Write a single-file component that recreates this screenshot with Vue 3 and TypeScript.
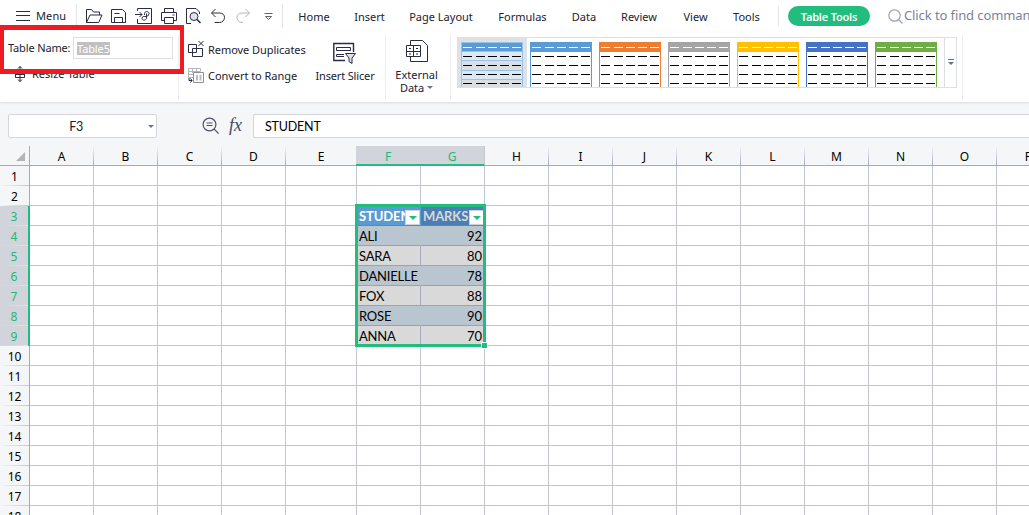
<script setup lang="ts">
interface Tab { label: string; width: number }
interface Column { name: string; width: number; selected: boolean }

const tabs: Tab[] = [
  { label: 'Home', width: 58 },
  { label: 'Insert', width: 53 },
  { label: 'Page Layout', width: 90 },
  { label: 'Formulas', width: 73 },
  { label: 'Data', width: 50 },
  { label: 'Review', width: 60 },
  { label: 'View', width: 53 },
  { label: 'Tools', width: 49 },
]
const thumbs: string[] = ['blue-light', 'blue', 'orange', 'gray', 'gold', 'indigo', 'green']
const dashX: number[] = [2, 15, 27, 39, 51]
const dashY: number[] = [14, 23, 32, 41]

const columns: Column[] = 'ABCDEFGHIJKLMNOP'.split('').map((name) => ({
  name,
  width: name === 'E' ? 71 : 64,
  selected: name === 'F' || name === 'G',
}))
const rows: number[] = Array.from({ length: 18 }, (_, i) => i + 1)
const data: Record<string, string> = {
  F3: 'STUDENT', G3: 'MARKS',
  F4: 'ALI', G4: '92',
  F5: 'SARA', G5: '80',
  F6: 'DANIELLE', G6: '78',
  F7: 'FOX', G7: '88',
  F8: 'ROSE', G8: '90',
  F9: 'ANNA', G9: '70',
}
const inRange = (r: number): boolean => r >= 3 && r <= 9
function cellClass(c: string, r: number): string[] {
  if ((c !== 'F' && c !== 'G') || !inRange(r)) return []
  const kind = r === 3 ? 'head' : r % 2 === 0 ? 'band' : 'plain'
  return ['filled', kind, 'col-' + c.toLowerCase()]
}
const template: string = '30px ' + columns.map((c) => c.width + 'px').join(' ')
</script>

<template>
  <div class="app">
    <header class="tabbar">
      <div class="menu">
        <svg width="14" height="12" viewBox="0 0 14 12"><path d="M0 1.500h14M0 5.500h14M0 10.500h14" /></svg>
        <span>Menu</span>
      </div>
      <div class="tools">
        <svg viewBox="0 0 18 18"><path d="M1.500 15.500V2.500h5l2 2.500h6v3M1.500 15.500L5 8h12l-3.300 7.500z" /></svg>
        <svg viewBox="0 0 18 18"><path d="M1.500 2.500h11l3 3v10h-14zM4.500 15.500V10.500H12.500V15.500M4.500 6.500H9.500" /></svg>
        <svg viewBox="0 0 18 18"><path d="M2.500 4V1.500H16.500V16.500H2.500V12M0 7.500H7M4.500 5L7 7.500L4.500 10M9.500 8V6.500C9.500 4 14 4 14 6.500S12 9.500 10 9.500M11.500 6.500V11C11.500 13.500 7 14 7 11.500S9 9.500 10 9.500" /></svg>
        <svg viewBox="0 0 18 18"><path d="M4.500 5.500V1.500H13.500V5.500M4 13.500H1.500V5.500H16.500V13.500H14M4.500 10.500H13.500V16.500H4.500zM12.500 8h2" /></svg>
        <svg viewBox="0 0 18 18"><path d="M6 16.500H1.500V1.500H11L14.500 5V7" /><circle cx="9" cy="9.500" r="4" class="lens" /><path d="M12 12.500l3.500 3.500" class="thick" /></svg>
        <svg viewBox="0 0 18 18"><path d="M5.500 2L1.500 6L5.500 10M1.800 6H9.500C13 6 14.500 8 14.500 10.500S12.500 15.500 9.500 15.500H4.500" /></svg>
        <svg viewBox="0 0 18 18" class="dim"><path d="M10.500 2L14.500 6L10.500 10M14.200 6H7C3.500 6 2 8 2 10.500S4 15.500 7 15.500H8" /></svg>
        <svg viewBox="0 0 18 18"><path d="M4.500 6.500H12.500M5.500 9.500H11.500L8.500 12.500z" class="chev" /></svg>
      </div>
      <nav class="tabs">
        <span v-for="t in tabs" :key="t.label" :style="{ width: t.width + 'px' }">{{ t.label }}</span>
      </nav>
      <div class="pill">Table Tools</div>
      <div class="search">
        <svg width="16" height="16" viewBox="0 0 16 16"><circle cx="6.500" cy="6.500" r="5.700" /><path d="M10.500 10.500l4 4" /></svg>
        <span>Click to find commands</span>
      </div>
    </header>

    <section class="ribbon">
      <div class="group naming">
        <div class="name-row"><span>Table Name:</span><div class="name-input"><mark>Table5</mark></div></div>
        <div class="resize">
          <svg width="12" height="18" viewBox="0 0 12 18"><path d="M4 3.500L6 1.500L8 3.500M4 14.500L6 16.500L8 14.500M1.500 6.500H10.500V12.500H1.500zM1.500 9.500H10.500M6 1.500V16.500" /></svg>
          <span>Resize Table</span>
        </div>
        <div class="highlight"></div>
      </div>
      <div class="group actions">
        <div class="stack">
          <div class="action"><svg viewBox="0 0 16 18"><path d="M.500 4.500H8.500V12.500H.500zM4.500 8.500H14.500V16.500H4.500zM10.500 1l5 5M15.500 1l-5 5" /></svg><span>Remove Duplicates</span></div>
          <div class="action"><svg viewBox="0 0 16 18"><path d="M.500 2.500H12.500V5M.500 2.500V11.500H5M.500 5.500H12.500M.500 8.500H5M4.500 2.500V7M8.500 2.500V6" class="dim" /><path d="M5.500 6.500H15.500V16.500H5.500z" class="mid" /><path d="M9 9V14.500M12.500 9V14.500" class="bars" /><path d="M1 12v2.500H4M2.500 12.500l1.500 2L2.500 16.500" /></svg><span>Convert to Range</span></div>
        </div>
        <div class="slicer">
          <svg width="24" height="22" viewBox="0 0 24 22"><path d="M12 18.500H.800V1.500H20.500V10" class="outline" /><path d="M3.500 5.500H17.500V8.500H3.500zM11 12.500H3.500V14.500H11" /><path d="M12.500 11.500H22.500L19 16V21.500L16 19.500V16z" class="funnel" /></svg>
          <span>Insert Slicer</span>
        </div>
      </div>
      <div class="group external">
        <svg width="24" height="24" viewBox="0 0 24 24"><path d="M5.500 6V1.500H17.500L22.500 6.500V22.500H5.500V18M1.500 6.500H15.500V17.500H1.500zM1.500 12.500H15.500M8.500 6.500V17.500" /><path d="M4 9.500h2M11 9.500h2M4 15h2M11 15h2" /></svg>
        <span>External</span>
        <span>Data <i class="caret"></i></span>
      </div>
      <div class="group styles">
        <div class="gallery">
          <div v-for="(t, i) in thumbs" :key="t" class="slot" :class="{ active: i === 0 }">
            <svg class="thumb" :class="t" width="62" height="45" viewBox="0 0 62 45" shape-rendering="crispEdges">
              <rect class="edge" width="62" height="50" />
              <rect class="paper" x="1" y="10" width="60" height="40" />
              <template v-if="i === 0">
                <rect class="alt" x="1" y="19" width="60" height="9" />
                <rect class="alt" x="1" y="38" width="60" height="9" />
                <path class="rule" d="M0 9.500H62M0 18.500H62M0 28.500H62M0 37.500H62M.500 0V45M61.500 0V45M0 .500H62" />
              </template>
              <rect v-for="x in dashX" :key="x" class="light" :x="x" y="5" width="9" height="1" />
              <template v-for="y in dashY" :key="'r' + y">
                <rect v-for="x in dashX" :key="x" :x="x" :y="y" width="9" height="1" />
              </template>
            </svg>
          </div>
          <div class="more"><svg width="6" height="7" viewBox="0 0 6 7"><path d="M0 0h6v1H0zM0 3h6L3 6z" /></svg></div>
        </div>
      </div>
    </section>

    <section class="formula">
      <div class="namebox"><span>F3</span><i class="caret"></i></div>
      <svg class="zoomer" width="18" height="18" viewBox="0 0 18 18"><circle cx="7.500" cy="7.500" r="6.400" /><path d="M12.200 12.200l4.300 4.300M4.500 6h6M4.500 8.500h6" /></svg>
      <span class="fx">fx</span>
      <div class="content">STUDENT</div>
    </section>

    <main class="sheet" :style="{ gridTemplateColumns: template }">
      <div class="corner"><i></i></div>
      <div v-for="c in columns" :key="c.name" class="colhead" :class="{ selected: c.selected }">{{ c.name }}</div>
      <template v-for="r in rows" :key="r">
        <div class="rowhead" :class="{ selected: inRange(r) }">{{ r }}</div>
        <div v-for="c in columns" :key="c.name + r" class="cell" :class="cellClass(c.name, r)">
          <span v-if="data[c.name + r]">{{ data[c.name + r] }}</span>
          <b v-if="r === 3 && c.selected" class="filter"><svg width="8" height="4" viewBox="0 0 8 4"><path d="M0 0h8L4 4z" /></svg></b>
        </div>
      </template>
      <div class="selection"><i></i></div>
    </main>
  </div>
</template>

<style>
body { margin: 0; overflow: hidden; }
</style>

<style scoped>
* { box-sizing: border-box; }
.app { width: 1029px; height: 515px; overflow: hidden; background: #f5f6f8; color: #21222f; font: 11px "Noto Sans", "Open Sans", sans-serif; white-space: nowrap; }
svg { display: block; flex: none; fill: none; stroke: #292c42; stroke-width: 1; }
i { font-style: normal; }
.tabbar { display: flex; height: 32px; background: #fff; }
.tabbar > * { flex: none; }
.menu { display: flex; align-items: center; width: 77px; height: 23px; margin-top: 4px; padding-left: 16px; gap: 6px; border-right: 1px solid #e3e4ea; }
.menu span { letter-spacing: .1px; }
.tools { display: flex; width: 206px; height: 24px; margin-top: 4px; padding: 3px 0 0 8px; gap: 7px; border-right: 1px solid #e3e4ea; }
.tools svg { width: 18px; height: 18px; }
.tools .dim { stroke: #b5b5b8; }
.lens { fill: #dfe3e8; }
.thick { stroke-width: 1.600; }
.outline { stroke-width: 1.400; }
.chev { stroke: #666; }
.tabs { display: flex; width: 496px; height: 20px; margin-top: 6px; padding-left: 2px; line-height: 21px; border-right: 1px solid #e3e4ea; }
.tabs span { flex: none; text-align: center; }
.pill { width: 82px; height: 20px; margin: 6px 0 0 9px; border-radius: 10px; background: #22bc7e; color: #fff; font-weight: 600; line-height: 21px; text-align: center; letter-spacing: -.2px; }
.search { display: flex; margin: 8px 0 0 18px; color: #7d819b; font-size: 13px; line-height: 15px; letter-spacing: -.1px; }
.search svg { margin-top: 1px; stroke: #9ba2be; stroke-width: 1.200; }

.ribbon { display: flex; height: 70px; background: #fff; box-shadow: 0 1px 2px #d9dade; position: relative; }
.group { flex: none; height: 65px; margin-top: 3px; border-right: 1px solid #ededf0; }
.naming { width: 179px; }
.name-row { display: flex; align-items: center; margin-top: 2px; height: 22px; padding-left: 8px; }
.name-row > span { width: 65px; letter-spacing: -.15px; margin-top: -2px; }
.name-input { width: 100px; height: 22px; border: 1px solid #dedfe3; padding-left: 3px; line-height: 20px; letter-spacing: -.1px; }
.name-input mark { display: inline-block; height: 13px; line-height: 14px; background: #c0c0c0; color: #fff; vertical-align: -1px; }
.resize { display: flex; margin-top: 6px; padding-left: 14px; gap: 6px; line-height: 18px; }
.highlight { position: absolute; left: 0; top: -7px; width: 184px; height: 49px; border: 5px solid #ef1b23; border-width: 5px 4px; }
.actions { display: flex; width: 207px; padding-left: 9px; }
.stack { width: 127px; padding-top: 5px; }
.action { display: flex; align-items: center; height: 18px; gap: 4px; margin-bottom: 8px; letter-spacing: -.05px; }
.action svg { width: 16px; height: 18px; margin-top: -1px; }
.action .dim { stroke: #b4b4b9; }
.action .mid { stroke: #8d8f9a; }
.bars { stroke: #b9bcc6; stroke-width: 2; }
.slicer { display: flex; flex-direction: column; flex: none; width: 60px; padding-top: 7px; align-items: center; gap: 4px; letter-spacing: -.15px; }
.funnel { fill: #dfe3e8; }
.external { display: flex; flex-direction: column; width: 65px; padding: 4px 3px 0 0; align-items: center; line-height: 13px; }
.external svg { margin: 0 0 5px 1px; }
.external span { height: 13px; }
.caret { display: inline-block; border: 3px solid transparent; border-top: 3px solid #6b7490; border-bottom: 0; vertical-align: 3px; }
.styles { width: 512px; padding: 2px 0 0 6px; }
.gallery { display: flex; width: 500px; height: 51px; border: 1px solid #dedfe2; overflow: hidden; }
.slot { flex: none; width: 69px; height: 50px; padding: 4px 0 0 3px; }
.slot.active { background: #dde2e6; }
.thumb { stroke: none; fill: #000; }
.edge { fill: #5b9bd5; }
.paper { fill: #fff; }
.light { fill: #fff; }
.blue-light .paper { fill: #dbe9f5; }
.alt { fill: #d9dfe2; }
.rule { stroke: #9bc2e6; stroke-width: 1; }
.orange .edge { fill: #ed7d31; }
.gray .edge { fill: #a5a5a5; }
.gold .edge { fill: #ffc000; }
.indigo .edge { fill: #4472c4; }
.green .edge { fill: #70ad47; }
.more { flex: none; width: 13px; margin-left: 3px; border-left: 1px solid #dedfe2; padding: 21px 0 0 3px; }
.more svg { stroke: none; fill: #69728f; }

.formula { display: flex; height: 44px; padding: 12px 0 0 8px; }
.namebox { position: relative; width: 149px; height: 24px; border: 1px solid #d4d6dc; border-radius: 2px; background: #fff; font: 12.5px/23px Lato, sans-serif; }
.namebox span { display: block; width: 134px; text-align: center; letter-spacing: -.3px; }
.namebox .caret { position: absolute; right: 2px; top: 10px; }
.zoomer { margin: 3px 0 0 45px; stroke: #4c5169; stroke-width: 1.200; }
.fx { width: 24px; margin: -2px 0 0 9px; font: italic 18px/26px "Liberation Serif", serif; color: #454a62; }
.content { flex: 1; height: 24px; border: 1px solid #d4d6dc; border-right: 0; border-radius: 2px 0 0 2px; background: #fff; padding-left: 11px; font: 12.5px/23px Lato, sans-serif; letter-spacing: -.2px; color: #000; }

.sheet { position: relative; display: grid; width: 1061px; grid-template-rows: 20px; grid-auto-rows: 20px; color: #000; font-size: 12px; }
.corner { border-bottom: 1px solid #9facc8; border-right: 1px solid #9facc8; background: #f5f6f8; padding: 6px 0 0 16px; }
.corner i { display: block; width: 9px; height: 9px; background: #b4b4b4; clip-path: polygon(100% 0, 100% 100%, 0 100%); }
.colhead { border-bottom: 1px solid #9facc8; padding-right: 1px; text-align: center; line-height: 21px; background: linear-gradient(#f5f6f8, #9facc8) right / 1px 100% no-repeat; }
.colhead.selected { color: #1fb87a; margin-left: -1px; padding-right: 0; background: #d1d4db; border-bottom: 2px solid #22bc7e; border-right: 1px solid #c4c8d4; }
.rowhead { border-right: 1px solid #9facc8; text-align: center; line-height: 21px; background: linear-gradient(90deg, #f5f6f8, #c0c7da) bottom / 100% 1px no-repeat, #f5f6f8; }
.rowhead.selected { color: #1fb87a; border-right: 2px solid #22bc7e; background: linear-gradient(90deg, #d1d4db, #dee1eb) bottom / 100% 1px no-repeat, #d1d4db; }
.cell { position: relative; background: #fff; border-right: 1px solid #c0c6da; border-bottom: 1px solid #c0c6da; font: 13px/21px Lato, sans-serif; letter-spacing: -.2px; overflow: hidden; }
.filled { padding: 0 2px; border-color: #8fa3c2; }
.col-g { text-align: right; letter-spacing: 0; }
.band { background: #b9c6d0; }
.plain { background: #d9d9d9; border-right-color: #a5acc4; }
.band.col-f { border-right-color: #b9c6d0; }
.head { font-weight: 700; color: #fff; border-right: 0; background: #5b9bd5; text-align: left; border-bottom-color: #5589bd; letter-spacing: -.1px; }
.head.col-g { background: #4b7fb4; color: #d9d9d9; }
.filter { position: absolute; right: 1px; bottom: 0; width: 15px; height: 15px; border: 1px solid #ced2dc; background: #fff; padding: 5px 0 0 3px; }
.filter svg { fill: #22bc7e; stroke: none; }
.selection { position: absolute; left: 355px; top: 58px; width: 131px; height: 143px; border: 3px solid #22bc7e; }
.selection i { position: absolute; right: -5px; bottom: -5px; width: 7px; height: 7px; border: 1px solid #fff; background: #22bc7e; }
</style>
